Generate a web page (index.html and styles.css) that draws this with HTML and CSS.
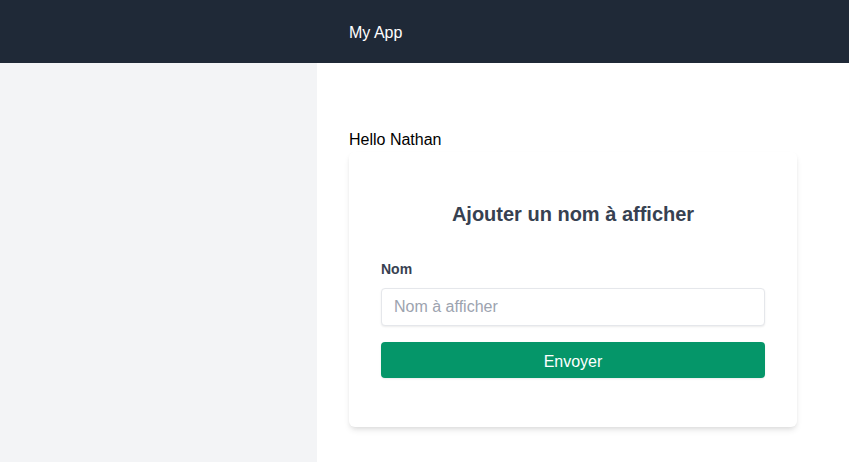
FILE: index.html
```html
<!DOCTYPE html>
<html lang="fr">
<head>
<meta charset="utf-8">
<title>My App</title>
<link rel="stylesheet" href="styles.css">
</head>
<body>
  <header class="topbar">
    <div class="topbar-spacer"></div>
    <div class="brand">My App</div>
  </header>
  <div class="layout">
    <aside class="sidebar"></aside>
    <main class="content">
      <p class="greeting">Hello Nathan</p>
      <form class="card">
        <h2 class="card-title">Ajouter un nom à afficher</h2>
        <label class="field-label" for="nom">Nom</label>
        <input class="field-input" id="nom" type="text" placeholder="Nom à afficher">
        <button class="submit" type="button">Envoyer</button>
      </form>
    </main>
  </div>
</body>
</html>
```

FILE: styles.css
```css
* { box-sizing: border-box; }
html, body { margin: 0; height: 100%; }
body {
  font-family: "Liberation Sans", Arial, sans-serif;
  font-size: 16px;
  line-height: 24px;
  color: #111827;
  display: flex;
  flex-direction: column;
  background: #fff;
}
.topbar {
  display: grid;
  grid-template-columns: 317px 1fr;
  height: 63px;
  background: #1f2937;
  align-items: center;
  flex-shrink: 0;
}
.brand {
  color: #fff;
  padding-left: 32px;
  padding-top: 3px;
}
.layout {
  flex: 1;
  display: flex;
}
.sidebar {
  width: 317px;
  background: #f3f4f6;
  flex-shrink: 0;
}
.content {
  flex: 1;
  padding: 65px 32px 32px;
}
.greeting {
  margin: 0;
  color: #000;
}
.card {
  width: 448px;
  background: #fff;
  border-radius: 6px;
  box-shadow: 0 4px 6px -1px rgba(0,0,0,0.1), 0 2px 4px -1px rgba(0,0,0,0.06);
  padding: 48px 32px 49px;
  display: flex;
  flex-direction: column;
}
.card-title {
  margin: 0 0 31px;
  font-size: 20px;
  line-height: 28px;
  font-weight: 700;
  text-align: center;
  color: #374151;
}
.field-label {
  font-size: 14px;
  line-height: 20px;
  font-weight: 700;
  color: #374151;
  margin-bottom: 9px;
}
.field-input {
  font: inherit;
  height: 38px;
  padding: 6px 12px;
  border: 1px solid #e5e7eb;
  border-radius: 4px;
  box-shadow: 0 1px 2px rgba(0,0,0,0.08);
  color: #374151;
  outline: none;
}
.field-input::placeholder { color: #9ca3af; }
.submit {
  font: inherit;
  margin-top: 16px;
  height: 36px;
  padding: 8px 16px 4px;
  border: none;
  border-radius: 4px;
  background: #059669;
  color: #fff;
  box-shadow: 0 1px 2px rgba(0,0,0,0.08);
  cursor: pointer;
}
```
